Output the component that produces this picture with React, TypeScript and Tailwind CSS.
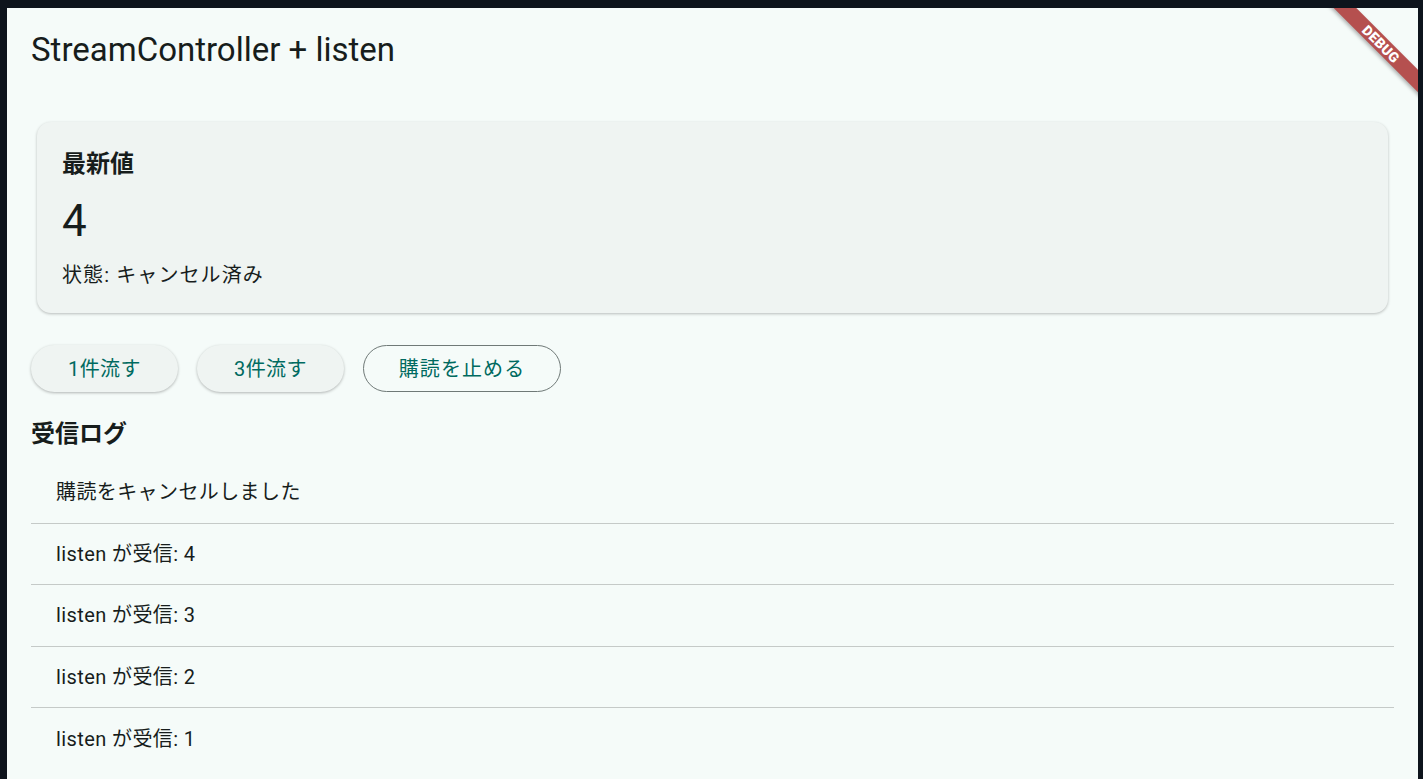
const font = "font-['Roboto','Noto_Sans_CJK_JP',sans-serif]";

const logs = [
  "購読をキャンセルしました",
  "listen が受信: 4",
  "listen が受信: 3",
  "listen が受信: 2",
  "listen が受信: 1",
];

function DebugBanner() {
  return (
    <div className="pointer-events-none absolute right-[-30px] top-[28px] flex h-[16px] w-[134px] rotate-45 items-center justify-center bg-[#b5504f] shadow-[0_2px_4px_rgba(0,0,0,0.3)]">
      <span className="text-[14px] font-black leading-none tracking-[0.3px] text-white">DEBUG</span>
    </div>
  );
}

export default function App() {
  return (
    <div className={`h-[779px] w-full bg-[#0d141c] pl-[7px] pr-[5px] pt-[8px] ${font}`}>
      <div className="relative flex h-full flex-col overflow-hidden bg-[#f5fbf9] text-[#171d1c]">
        <DebugBanner />
        <header className="flex h-[82px] shrink-0 items-center px-[24px]">
          <h1 className="text-[33px] font-normal leading-none">StreamController + listen</h1>
        </header>

        <main className="flex flex-col px-[24px] pt-[32px]">
          <div className="mx-[6px] flex h-[191px] flex-col rounded-[14px] bg-[#eff4f2] px-[25px] pt-[27px] shadow-[0_1px_3px_rgba(0,0,0,0.25)]">
            <h2 className="text-[24px] font-bold leading-[30px]">最新値</h2>
            <p className="mt-[17px] text-[44px] leading-[50px]">4</p>
            <p className="mt-[15px] text-[20px] leading-[28px] tracking-[1.1px]">状態: キャンセル済み</p>
          </div>

          <div className="mt-[32px] flex gap-[19px]">
            <button className="h-[47px] w-[147px] rounded-full bg-[#eff4f2] text-[20px] tracking-[0.4px] text-[#006a60] shadow-[0_1px_3px_rgba(0,0,0,0.28)]">
              1件流す
            </button>
            <button className="h-[47px] w-[147px] rounded-full bg-[#eff4f2] text-[20px] tracking-[0.4px] text-[#006a60] shadow-[0_1px_3px_rgba(0,0,0,0.28)]">
              3件流す
            </button>
            <button className="h-[47px] w-[198px] rounded-full border-[1.5px] border-[#6f7977] text-[20px] tracking-[1.1px] text-[#006a60]">
              購読を止める
            </button>
          </div>

          <h2 className="mt-[25px] text-[24px] font-bold leading-[34px]">受信ログ</h2>

          <ul className="mt-[11px] flex flex-col">
            {logs.map((log, i) => (
              <li
                key={log}
                className={`flex h-[61.5px] items-center px-[25px] text-[20px] tracking-[0.4px] ${
                  i < logs.length - 1 ? "border-b-[1.5px] border-[#c5cac8]" : ""
                }`}
              >
                {log}
              </li>
            ))}
          </ul>
        </main>
      </div>
    </div>
  );
}
